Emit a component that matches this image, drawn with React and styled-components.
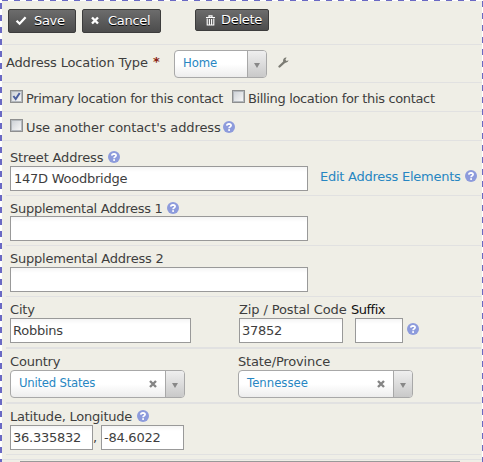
import React from "react";
import styled, { createGlobalStyle } from "styled-components";

const Global = createGlobalStyle`
  * { box-sizing: border-box; }
  body { margin: 0; background: #efeee6; }
`;

const dash = "#6a69c4 0 6px, #fff 6px 12px";

const Page = styled.div`
  width: 483px;
  height: 462px;
  overflow: hidden;
  padding: 1px 1px 0 2px;
  font: 13px/16px "DejaVu Sans", Verdana, sans-serif;
  color: #3e3e3e;
  white-space: nowrap;
  background:
    repeating-linear-gradient(to bottom, ${dash}) 0 -9px / 2px 480px no-repeat,
    repeating-linear-gradient(to bottom, ${dash}) 482px -11px / 1px 480px no-repeat,
    repeating-linear-gradient(to right, ${dash}) -10px 0 / 500px 1px no-repeat,
    #efeee6;
`;

const Row = styled.div`
  display: flex;
  align-items: flex-start;
  height: ${(p) => p.$h}px;
  margin-left: ${(p) => p.$inset || 0}px;
  margin-right: ${(p) => (p.$inset ? 1 : 0)}px;
  padding: ${(p) => p.$pad || "0"};
  border-bottom: ${(p) => p.$line || 1}px solid #e1e1e1;
`;

const Label = styled.span`
  display: block;
  flex: none;
  height: 16px;
  width: ${(p) => p.$w}px;
  letter-spacing: ${(p) => p.$ls || 0}px;
  color: ${(p) => p.$color || "inherit"};
  margin-top: ${(p) => p.$mt ?? 1}px;
`;

const Required = styled(Label)`
  margin-left: 5px;
  color: #8a1f11;
  font-weight: 700;
`;

const Button = styled.button`
  display: flex;
  align-items: center;
  flex: none;
  width: ${(p) => p.$w}px;
  height: ${(p) => p.$h}px;
  margin: ${(p) => p.$m};
  padding: ${(p) => p.$pad};
  border: 1px solid #3c3c3c;
  border-radius: 2px;
  background: linear-gradient(#6c6c6c, #4c4c4c);
  color: #fff;
  font: 13px/16px "DejaVu Sans", Verdana, sans-serif;
  letter-spacing: -0.3px;
  text-shadow: 0 1px 0 #000;
`;

const ButtonIcon = styled.svg`
  flex: none;
  width: 12px;
  height: 12px;
  margin-right: ${(p) => p.$gap}px;
`;

const Select = styled.div`
  display: flex;
  align-items: center;
  flex: none;
  width: ${(p) => p.$w}px;
  height: 28px;
  margin-left: ${(p) => p.$ml || 0}px;
  border: 1px solid #a8a8a8;
  border-radius: 4px;
  overflow: hidden;
  background: linear-gradient(#fff 50%, #ededed);
  color: #2786c2;
  font-size: 11.7px;
  line-height: 14px;
  letter-spacing: ${(p) => p.$ls || 0}px;
  padding-left: 8px;
`;

const SelectText = styled.span`
  flex: 1;
  padding-bottom: 2px;
`;

const Arrow = styled.span`
  display: flex;
  align-items: center;
  justify-content: center;
  width: 19px;
  height: 26px;
  padding-top: 3px;
  margin-left: ${(p) => p.$gap || 0}px;
  border-left: 1px solid #a8a8a8;
  background: linear-gradient(#efefef, #c9c9c9);
  &::after {
    content: "";
    border: 3px solid transparent;
    border-top: 5px solid #888;
    border-bottom: 0;
  }
`;

const Box = styled.span`
  display: grid;
  place-items: center;
  flex: none;
  width: 13px;
  height: 13px;
  margin: ${(p) => p.$m};
  border: 1px solid #8e8f8f;
  background: #f4f4f4;
  &::before {
    content: "";
    grid-area: 1 / 1;
    width: 9px;
    height: 9px;
    border: 1px solid #b4b9be;
    background: linear-gradient(135deg, #cfd3d8, #f6f6f6);
  }
  svg { grid-area: 1 / 1; }
`;

const Column = styled.div`
  flex: none;
  width: ${(p) => p.$w}px;
`;

const Line = styled.div`
  display: flex;
  height: ${(p) => p.$h || 17}px;
`;

const Input = styled.input`
  display: block;
  flex: none;
  width: ${(p) => p.$w}px;
  height: 25px;
  margin: 0 0 0 ${(p) => p.$ml || 0}px;
  padding: 0 2px 1px ${(p) => p.$pl || 2}px;
  border: 1px solid #999;
  border-radius: 0;
  background: linear-gradient(#f5f5f5, #fff 5px);
  color: #3e3e3e;
  font: 13px/16px "DejaVu Sans", Verdana, sans-serif;
  letter-spacing: -0.25px;
  outline: 0;
`;

const HelpIcon = styled.svg`
  flex: none;
  width: 12px;
  height: 12px;
  margin: ${(p) => p.$m || "2px 0 0 0"};
`;

const SmallIcon = styled.svg`
  flex: none;
  width: ${(p) => p.$s}px;
  height: ${(p) => p.$s}px;
  margin: ${(p) => p.$m || "0"};
`;

const NextSection = styled.div`
  height: 1px;
  margin: 1px 22px 0 18px;
  background: #999;
`;

const Help = ({ m }) => (
  <HelpIcon viewBox="0 0 12 12" $m={m}>
    <circle cx="6" cy="6" r="6" fill="#8d9bdc" />
    <path d="M3.8 4.6Q3.9 2.8 6 2.8Q8.1 2.9 8.1 4.5Q8 5.3 6.9 5.9Q6.1 6.3 6.1 7.2" fill="none" stroke="#fff" strokeWidth="1.7" />
    <rect x="5.2" y="8.2" width="1.8" height="1.7" fill="#fff" />
  </HelpIcon>
);

const Cross = () => (
  <SmallIcon $s={8} viewBox="0 0 8 8">
    <path d="M1 1L7 7M7 1L1 7" stroke="#858585" strokeWidth="2.4" />
  </SmallIcon>
);

export default function App() {
  return (
    <>
      <Global />
      <Page>
        <Row $h={44} $pad="0 0 0 6px">
          <Button $w={68} $h={24} $m="8px 6px 0 0" $pad="0 0 0 6px">
            <ButtonIcon viewBox="0 0 12 12" $gap={7}>
              <path d="M1.6 5.7L4.6 8.7L10.6 2.3" fill="none" stroke="#fff" strokeWidth="2.3" />
            </ButtonIcon>
            Save
          </Button>
          <Button $w={79} $h={24} $m="8px 34px 0 0" $pad="0 0 0 6px">
            <ButtonIcon viewBox="0 0 12 12" $gap={7}>
              <path d="M3 2.5L9 8.5M9 2.5L3 8.5" stroke="#fff" strokeWidth="2.4" />
            </ButtonIcon>
            Cancel
          </Button>
          <Button $w={74} $h={22} $m="8px 0 0 0" $pad="0 0 1px 8px">
            <ButtonIcon viewBox="0 0 12 12" $gap={5}>
              <path d="M2 3.5H11M5 3V1.8H8V3" fill="none" stroke="#fff" strokeWidth="1.2" />
              <path d="M3.2 4.5V11H9.8V4.5M5.4 5V11M7.6 5V11" fill="none" stroke="#fff" strokeWidth="1.1" />
            </ButtonIcon>
            Delete
          </Button>
        </Row>

        <Row $h={38} $pad="5px 0 0 4px">
          <Label $w={142} $mt={5} $ls={-0.15}>Address Location Type</Label>
          <Required $w={9} $mt={4}>*</Required>
          <Select $w={93} $ml={12} $ls={-0.1}>
            <SelectText>Home</SelectText>
            <Arrow />
          </Select>
          <SmallIcon $s={11} $m="7px 0 0 11px" viewBox="0 0 11 11">
            <path d="M1.5 9.5L6.5 4.8" stroke="#7c7c74" strokeWidth="2.3" strokeLinecap="round" />
            <path d="M8.6 .6A3 3 0 0 0 5.2 4.4A3 3 0 0 0 10.6 3.2L8.6 4L7.4 2.8Z" fill="#7c7c74" />
          </SmallIcon>
        </Row>

        <Row $h={29} $pad="0 0 0 8px">
          <Box $m="7px 3px 0 0">
            <svg width="11" height="11" viewBox="0 0 11 11">
              <path d="M2.4 5L4.7 8L8.7 2" fill="none" stroke="#4b5f9e" strokeWidth="2" />
            </svg>
          </Box>
          <Label $w={206} $mt={8} $ls={-0.35}>Primary location for this contact</Label>
          <Box $m="7px 3px 0 0" />
          <Label $w={190} $mt={8} $ls={-0.35}>Billing location for this contact</Label>
        </Row>

        <Row $h={29} $pad="0 0 0 8px">
          <Box $m="7px 3px 0 0" />
          <Label $w={197} $mt={8} $ls={-0.1}>Use another contact's address</Label>
          <Help m="9px 0 0 0" />
        </Row>

        <Row $h={55} $inset={4} $pad="8px 0 0 4px">
          <Column $w={310}>
            <Line>
              <Label $w={98} $ls={-0.15}>Street Address</Label>
              <Help />
            </Line>
            <Input $w={298} $pl={3} defaultValue="147D Woodbridge" />
          </Column>
          <Label $w={145} $mt={20} $color="#2786c2" $ls={-0.25}>Edit Address Elements</Label>
          <Help m="21px 0 0 0" />
        </Row>

        <Row $h={50} $inset={4} $pad="4px 0 0 4px">
          <Column $w={298}>
            <Line $h={16}>
              <Label $w={157} $ls={-0.27}>Supplemental Address 1</Label>
              <Help />
            </Line>
            <Input $w={298} />
          </Column>
        </Row>

        <Row $h={51} $inset={4} $pad="4px 0 0 4px">
          <Column $w={298}>
            <Line>
              <Label $w={157} $ls={-0.23}>Supplemental Address 2</Label>
            </Line>
            <Input $w={298} />
          </Column>
        </Row>

        <Row $h={52} $inset={4} $line={2} $pad="4px 0 0 4px">
          <Column $w={229}>
            <Line><Label $ls={-0.2}>City</Label></Line>
            <Input $w={181} defaultValue="Robbins" />
          </Column>
          <Column $w={180}>
            <Line>
              <Label $w={112} $ls={-0.12}>Zip / Postal Code</Label>
              <Label $color="#111" $ls={-0.5}>Suffix</Label>
            </Line>
            <Line $h={25}>
              <Input $w={104} defaultValue="37852" />
              <Input $w={48} $ml={12} />
              <Help m="5px 0 0 4px" />
            </Line>
          </Column>
        </Row>

        <Row $h={55} $inset={4} $line={2} $pad="4px 0 0 4px">
          <Column $w={228}>
            <Line><Label $ls={-0.2}>Country</Label></Line>
            <Select $w={175} $ls={-0.23}>
              <SelectText>United States</SelectText>
              <Cross />
              <Arrow $gap={8} />
            </Select>
          </Column>
          <Column $w={175}>
            <Line><Label $ls={-0.15}>State/Province</Label></Line>
            <Select $w={175}>
              <SelectText>Tennessee</SelectText>
              <Cross />
              <Arrow $gap={8} />
            </Select>
          </Column>
        </Row>

        <Row $h={51} $inset={4} $pad="4px 0 0 4px">
          <Column $w={200}>
            <Line>
              <Label $w={127} $ls={-0.23}>Latitude, Longitude</Label>
              <Help />
            </Line>
            <Line $h={25}>
              <Input $w={83} defaultValue="36.335832" />
              <Label $w={8} $mt={5}>,</Label>
              <Input $w={83} defaultValue="-84.6022" />
            </Line>
          </Column>
        </Row>

        <Row $h={5} />
        <NextSection />
      </Page>
    </>
  );
}
